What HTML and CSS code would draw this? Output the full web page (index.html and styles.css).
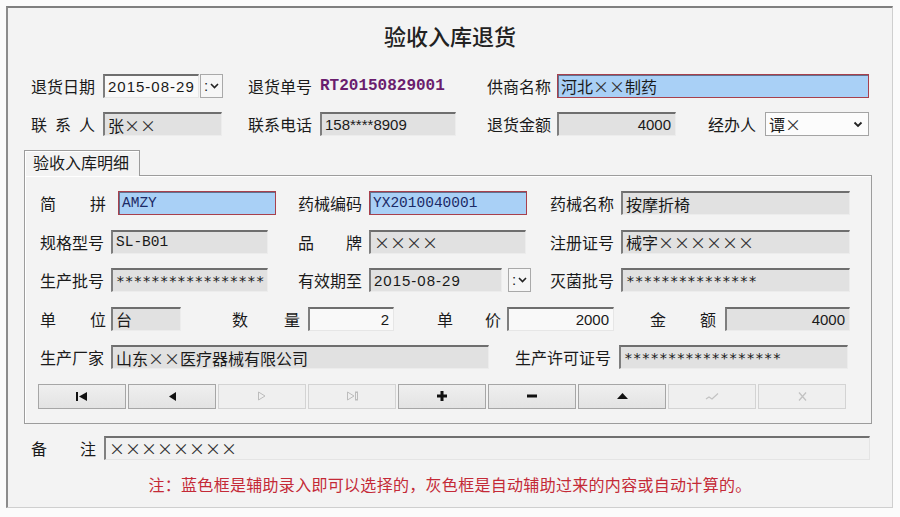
FILE: index.html
```html
<!DOCTYPE html>
<html lang="zh-CN">
<head>
<meta charset="utf-8">
<title>验收入库退货</title>
<link rel="stylesheet" href="styles.css">
</head>
<body>
<div class="frame">
  <h1 class="title">验收入库退货</h1>

  <div class="toprow r1">
    <span class="lbl w64">退货日期</span>
    <span class="fld white num date">2015-08-29</span>
    <span class="dd"><span class="colon">:</span><svg width="9" height="6" viewBox="0 0 9 6"><polyline points="1,1 4.5,4.5 8,1" fill="none" stroke="#222" stroke-width="1.6"/></svg></span>
    <span class="lbl w64 t-code-l">退货单号</span>
    <span class="code">RT20150829001</span>
    <span class="lbl w64 t-sup-l">供商名称</span>
    <span class="fld blue t-sup">河北<span class="x">××</span>制药</span>
  </div>

  <div class="toprow r2">
    <span class="lbl w64 j">联系人</span>
    <span class="fld gray t-contact">张<span class="x">××</span></span>
    <span class="lbl w64 t-tel-l">联系电话</span>
    <span class="fld gray num t-tel">158****8909</span>
    <span class="lbl w64 t-amt-l">退货金额</span>
    <span class="fld gray num right t-amt">4000</span>
    <span class="lbl t-op-l">经办人</span>
    <span class="fld select t-op"><span>谭<span class="x">×</span></span><svg width="10" height="7" viewBox="0 0 10 7"><polyline points="1.5,1.5 5,5 8.5,1.5" fill="none" stroke="#222" stroke-width="1.8"/></svg></span>
  </div>

  <div class="tab">验收入库明细</div>
  <div class="panel">
    <div class="prow">
      <div class="c1"><span class="lbl w66 j">简拼</span><span class="fld blue mono navy b-py">AMZY</span></div>
      <div class="c2"><span class="lbl w64">药械编码</span><span class="fld blue mono navy w158">YX2010040001</span></div>
      <div class="c3"><span class="lbl w64">药械名称</span><span class="fld gray w229">按摩折椅</span></div>
    </div>
    <div class="prow">
      <div class="c1"><span class="lbl w64">规格型号</span><span class="fld gray mono w157">SL-B01</span></div>
      <div class="c2"><span class="lbl w64 j">品牌</span><span class="fld gray w157"><span class="x">××××</span></span></div>
      <div class="c3"><span class="lbl w64">注册证号</span><span class="fld gray w229">械字<span class="x">××××××</span></span></div>
    </div>
    <div class="prow">
      <div class="c1"><span class="lbl w64">生产批号</span><span class="fld gray stars w157">*****************</span></div>
      <div class="c2"><span class="lbl w64">有效期至</span><span class="fld gray num date w133">2015-08-29</span><span class="dd dd-exp"><span class="colon">:</span><svg width="9" height="6" viewBox="0 0 9 6"><polyline points="1,1 4.5,4.5 8,1" fill="none" stroke="#222" stroke-width="1.6"/></svg></span></div>
      <div class="c3"><span class="lbl w64">灭菌批号</span><span class="fld gray stars w229">***************</span></div>
    </div>
    <div class="prow">
      <span class="lbl w66 j">单位</span>
      <span class="fld gray d-unit">台</span>
      <span class="lbl w68 j d-qty-l">数量</span>
      <span class="fld white num right d-qty">2</span>
      <span class="lbl w64 j d-price-l">单价</span>
      <span class="fld white num right d-price">2000</span>
      <span class="lbl w66 j d-sum-l">金额</span>
      <span class="fld gray num right d-sum">4000</span>
    </div>
    <div class="prow">
      <span class="lbl w64">生产厂家</span>
      <span class="fld gray e-maker">山东<span class="x">××</span>医疗器械有限公司</span>
      <span class="lbl e-lic-l">生产许可证号</span>
      <span class="fld gray stars e-lic">******************</span>
    </div>
    <div class="nav">
      <button class="btn" type="button"><svg width="12" height="9" viewBox="0 0 12 9"><rect x="0" y="0" width="2" height="9" fill="#111"/><polygon points="11,0 11,9 3,4.5" fill="#111"/></svg></button>
      <button class="btn" type="button"><svg width="9" height="9" viewBox="0 0 9 9"><polygon points="8,0 8,9 1,4.5" fill="#111"/></svg></button>
      <button class="btn off" type="button"><svg width="10" height="10" viewBox="0 0 10 10"><polygon points="1.5,1 1.5,9 8,5" fill="none" stroke="#bcbcbc" stroke-width="1"/></svg></button>
      <button class="btn off" type="button"><svg width="13" height="10" viewBox="0 0 13 10"><polygon points="1.5,1 1.5,9 8,5" fill="none" stroke="#bcbcbc" stroke-width="1"/><rect x="9.5" y="1" width="2" height="8" fill="none" stroke="#bcbcbc" stroke-width="1"/></svg></button>
      <button class="btn" type="button"><svg width="10" height="10" viewBox="0 0 10 10"><rect x="0" y="3.5" width="10" height="3" fill="#111"/><rect x="3.5" y="0" width="3" height="10" fill="#111"/></svg></button>
      <button class="btn" type="button"><svg width="10" height="4" viewBox="0 0 10 4"><rect x="0" y="0.5" width="10" height="3" fill="#111"/></svg></button>
      <button class="btn" type="button"><svg width="11" height="6" viewBox="0 0 11 6"><polygon points="0,6 11,6 5.5,0" fill="#111"/></svg></button>
      <button class="btn off" type="button"><svg width="14" height="9" viewBox="0 0 14 9"><polyline points="1,7 4,5 7,7 13,1.5" fill="none" stroke="#c2c2c2" stroke-width="1.2"/></svg></button>
      <button class="btn off" type="button"><svg width="11" height="11" viewBox="0 0 11 11"><path d="M2 1.5 L9 9.5 M9 1.5 L2 9.5" fill="none" stroke="#c2c2c2" stroke-width="1.3"/></svg></button>
    </div>
  </div>

  <div class="remark">
    <span class="lbl w65 j">备注</span>
    <span class="fld memo"><span class="x">××××××××</span></span>
  </div>

  <p class="note">注：蓝色框是辅助录入即可以选择的，灰色框是自动辅助过来的内容或自动计算的。</p>
</div>
</body>
</html>
```

FILE: styles.css
```css
* { box-sizing: border-box; }

body {
  margin: 0;
  background: #fbfbfb;
  font-family: "Noto Sans CJK SC", "Liberation Sans", sans-serif;
  font-size: 16px;
  color: #1a1a1a;
}

.frame {
  margin: 6px 0 0 6px;
  width: 887px;
  height: 502px;
  background: #f3f3f3;
  border-top: 2px solid #7f7f7f;
  border-left: 2px solid #8c8c8c;
  border-right: 1px solid #cfcfcf;
  border-bottom: 1px solid #cfcfcf;
}

.title {
  margin: 0;
  padding-top: 14px;
  height: 40px;
  line-height: 26px;
  text-align: center;
  font-size: 22px;
  font-weight: 500;
  color: #222;
  letter-spacing: 0;
}

.toprow {
  display: flex;
  align-items: center;
  height: 24px;
  padding-left: 23px;
}
.r1 { margin-top: 26px; }
.r2 { margin-top: 14px; }

.lbl {
  flex: none;
  line-height: 24px;
  white-space: nowrap;
}
.j { text-align: justify; text-align-last: justify; }
.w64 { width: 64px; }
.w65 { width: 65px; }
.w66 { width: 66px; }
.w68 { width: 68px; }

.fld {
  flex: none;
  display: flex;
  align-items: center;
  height: 24px;
  padding: 0 3px;
  white-space: nowrap;
  overflow: hidden;
  margin-left: 7px;
}
.num { font-family: "Liberation Sans", "Noto Sans CJK SC", sans-serif; font-size: 15px; }
.date { letter-spacing: 1px; }
.mono { font-family: "Liberation Mono", monospace; font-size: 14.5px; }
.stars { font-family: "DejaVu Sans Mono", monospace; font-size: 14.5px; }
.right { justify-content: flex-end; padding-right: 4px; }
.x { font-family: "Noto Sans CJK SC", sans-serif; font-feature-settings: "fwid"; color: #333; }

.gray {
  background: #e1e1e1;
  border-top: 2px solid #6e6e6e;
  border-left: 2px solid #7e7e7e;
  border-right: 1px solid #ececec;
  border-bottom: 1px solid #ececec;
}
.white {
  background: #f9f9f9;
  border-top: 2px solid #6e6e6e;
  border-left: 2px solid #7e7e7e;
  border-right: 1px solid #e6e6e6;
  border-bottom: 1px solid #e6e6e6;
}
.blue {
  background: #a9d0f6;
  border: 1px solid #a8404c;
  box-shadow: inset 1px 1px 0 #62708e;
}
.navy { color: #1c2a66; }
.select {
  background: #fcfcfc;
  border: 1px solid #a4a4a4;
  justify-content: space-between;
  padding: 0 5px 0 3px;
}

.dd {
  flex: none;
  display: flex;
  align-items: center;
  justify-content: center;
  gap: 2px;
  width: 23px;
  height: 24px;
  margin-left: 1px;
  border: 1px solid #a9a9a9;
  background: #f6f6f6;
  font-family: "Liberation Sans", sans-serif;
  font-size: 15px;
  color: #222;
}
.colon { line-height: 1; margin-top: -1px; }

.code {
  flex: none;
  width: 137px;
  margin-left: 8px;
  font-family: "Liberation Mono", monospace;
  font-weight: bold;
  font-size: 16px;
  color: #6a1d6e;
  line-height: 24px;
}

/* top rows */
.r1 .date { margin-left: 8px; width: 96px; }
.t-code-l { margin-left: 25px; }
.t-sup-l { margin-left: 30px; }
.t-sup { margin-left: 6px; width: 312px; }
.t-contact { margin-left: 8px; width: 119px; }
.t-tel-l { margin-left: 26px; }
.t-tel { margin-left: 8px; width: 136px; }
.t-amt-l { margin-left: 31px; }
.t-amt { margin-left: 6px; width: 119px; }
.t-op-l { margin-left: 32px; width: 48px; }
.t-op { margin-left: 9px; width: 104px; }

/* tab + panel */
.tab {
  position: relative;
  z-index: 1;
  margin: 14px 0 -1px 16px;
  width: 116px;
  height: 26px;
  padding-left: 8px;
  line-height: 23px;
  background: #f3f3f3;
  border: 1px solid #9c9c9c;
  border-bottom: none;
  box-shadow: inset 1px 1px 0 #ffffff;
}
.panel {
  margin-left: 16px;
  width: 848px;
  border: 1px solid #9c9c9c;
  box-shadow: inset 1px 1px 0 #ffffff;
  padding: 15px 0 14px 15px;
  display: flex;
  flex-direction: column;
  gap: 14.6px;
}
.prow {
  display: flex;
  align-items: center;
  height: 24px;
}
.c1, .c2, .c3 { display: flex; align-items: center; flex: none; }
.c1 { width: 258px; }
.c2 { width: 252px; }

.b-py { margin-left: 12px; width: 158px; }
.w158 { width: 158px; }
.w157 { width: 157px; }
.w133 { width: 133px; }
.w229 { width: 229px; }
.dd-exp { margin-left: 6px; }

.d-unit { margin-left: 5px; width: 70px; }
.d-qty-l { margin-left: 51px; }
.d-qty { margin-left: 8px; width: 86px; }
.d-price-l { margin-left: 43px; }
.d-price { margin-left: 6px; width: 107px; }
.d-sum-l { margin-left: 36px; }
.d-sum { margin-left: 9px; width: 125px; }

.e-maker { width: 378px; }
.e-lic-l { margin-left: 26px; width: 96px; }
.e-lic { margin-left: 8px; width: 229px; }

.nav {
  display: flex;
  gap: 2px;
  height: 25px;
  margin-left: -2px;
}
.btn {
  flex: none;
  width: 88px;
  height: 25px;
  padding: 0;
  display: flex;
  align-items: center;
  justify-content: center;
  border: 1px solid #a6a6a6;
  background: linear-gradient(#efefef, #e3e3e3);
}
.btn.off {
  border-color: #d3d3d3;
  background: #efefef;
}

/* remark + note */
.remark {
  display: flex;
  align-items: center;
  height: 24px;
  margin-top: 12px;
  padding-left: 23px;
}
.memo {
  margin-left: 8px;
  width: 766px;
  background: #f1f1f1;
  border-top: 2px solid #707070;
  border-left: 2px solid #808080;
  border-right: 1px solid #e4e4e4;
  border-bottom: 1px solid #e4e4e4;
}

.note {
  margin: 14px 0 0;
  text-align: center;
  line-height: 20px;
  font-size: 16px;
  letter-spacing: 0.3px;
  color: #c42a37;
}
```
